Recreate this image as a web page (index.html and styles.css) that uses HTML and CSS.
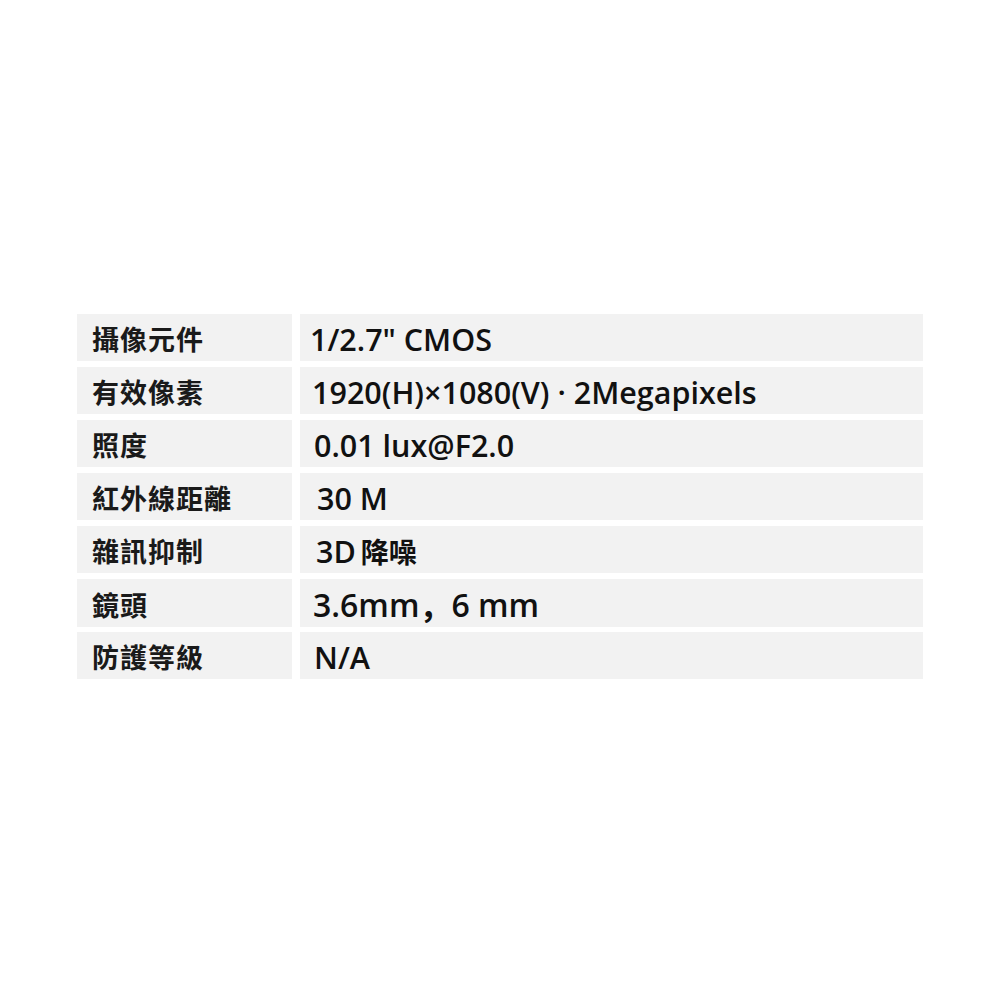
FILE: index.html
```html
<!DOCTYPE html>
<html lang="zh-Hant">
<head>
<meta charset="utf-8">
<title>規格</title>
<link rel="stylesheet" href="styles.css">
</head>
<body>
<div class="page">
  <div class="specs">
    <div class="row">
      <div class="label">攝像元件</div>
      <div class="value v1">1/2.7" CMOS</div>
    </div>
    <div class="row">
      <div class="label">有效像素</div>
      <div class="value v2">1920(H)×1080(V) · 2Megapixels</div>
    </div>
    <div class="row">
      <div class="label">照度</div>
      <div class="value v3">0.01 lux@F2.0</div>
    </div>
    <div class="row">
      <div class="label">紅外線距離</div>
      <div class="value v4">30 M</div>
    </div>
    <div class="row">
      <div class="label">雜訊抑制</div>
      <div class="value v5">3D <span class="cjk">降噪</span></div>
    </div>
    <div class="row">
      <div class="label">鏡頭</div>
      <div class="value v6 big">3.6mm<span class="comma">，</span>6 mm</div>
    </div>
    <div class="row">
      <div class="label">防護等級</div>
      <div class="value v7">N/A</div>
    </div>
  </div>
</div>
</body>
</html>
```

FILE: styles.css
```css
html, body {
  margin: 0;
  padding: 0;
  background: #ffffff;
}

.page {
  width: 1000px;
  height: 1000px;
  padding: 314px 0 0 77px;
  box-sizing: border-box;
}

.specs {
  width: 846px;
  display: flex;
  flex-direction: column;
  gap: 6px;
}

.row {
  display: grid;
  grid-template-columns: 215px 623px;
  column-gap: 8px;
  height: 47px;
}

.label,
.value {
  background: #f2f2f2;
  display: flex;
  align-items: center;
  color: #1a1a1a;
  padding-top: 2px;
  box-sizing: border-box;
}

.label {
  padding-left: 15px;
  font-family: "Noto Sans CJK TC", "Noto Sans CJK SC", sans-serif;
  font-weight: 700;
  font-size: 27px;
  letter-spacing: 1px;
}

.value {
  font-family: "Open Sans", "Noto Sans CJK TC", sans-serif;
  font-weight: 600;
  font-size: 30.5px;
  color: #111111;
  white-space: nowrap;
}

.value .cjk {
  font-family: "Noto Sans CJK TC", sans-serif;
  font-weight: 700;
  font-size: 28px;
  margin-left: 5px;
}

.value .comma {
  font-family: "Noto Sans CJK JP", sans-serif;
  font-weight: 700;
}

.v1 { padding-left: 10px; }
.v2 { padding-left: 12px; }
.v3 { padding-left: 14px; }
.v4 { padding-left: 17px; }
.v5 { padding-left: 16px; }
.v6 { padding-left: 13px; }
.v7 { padding-left: 14px; }

.big {
  font-size: 32px;
}
```
